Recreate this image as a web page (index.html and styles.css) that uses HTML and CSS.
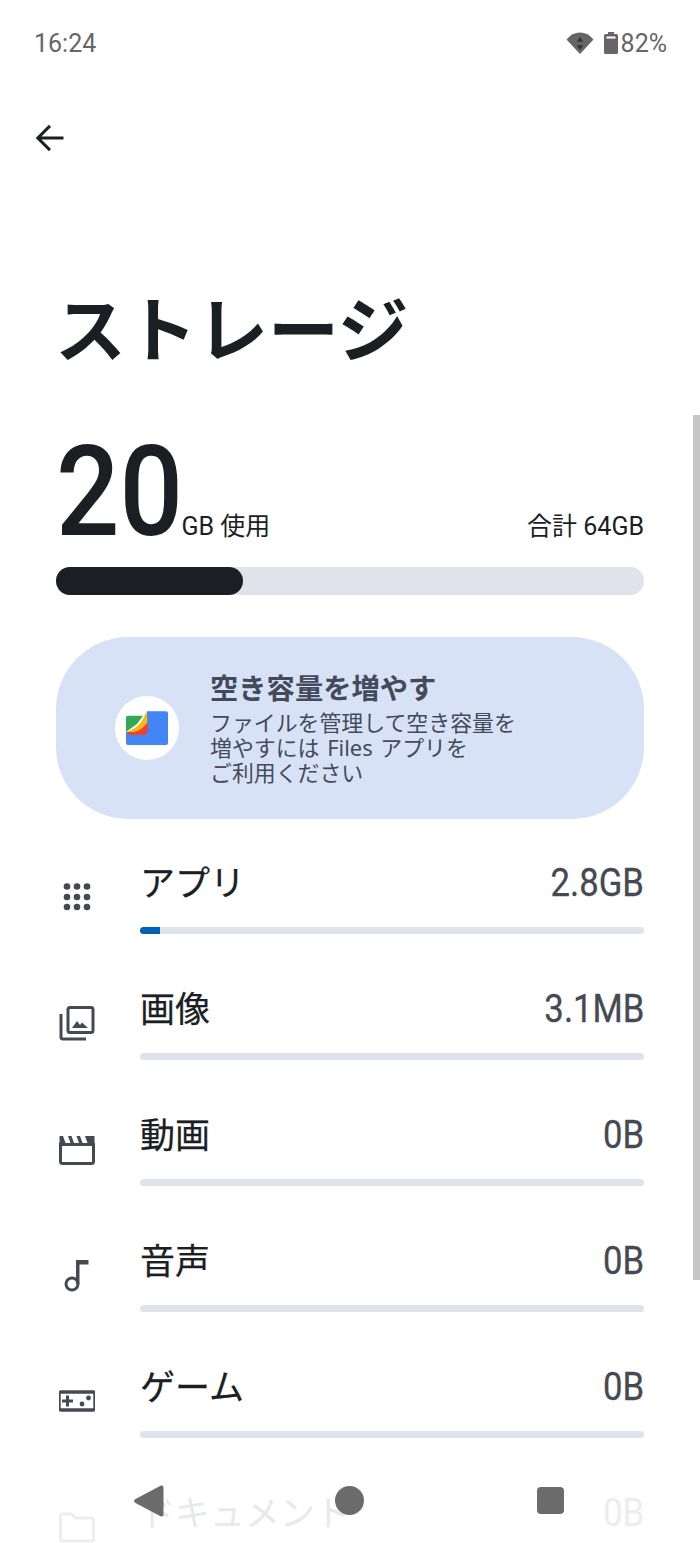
FILE: index.html
```html
<!DOCTYPE html>
<html lang="ja">
<head>
<meta charset="utf-8">
<title>ストレージ</title>
<link rel="stylesheet" href="styles.css">
</head>
<body>
<div class="screen">
  <header class="status">
    <span class="time">16:24</span>
    <div class="status-right">
      <svg class="wifi" viewBox="0 0 28 22"><path fill="#666" d="M14 22 .5 7.500Q6 .5 14 .5t13.500 7z"/><path fill="#333" d="M14 5l3.200 4.800h-6.400zM14 18l-3.200-4.800h6.400z"/></svg>
      <svg class="battery" viewBox="0 0 14 22"><path fill="#666" d="M4 0h6v2h2.500q1.500 0 1.500 1.500v17q0 1.500-1.500 1.500h-11Q0 22 0 20.500v-17Q0 2 1.500 2H4z"/><rect x="2.500" y="4.500" width="9" height="2" fill="#fff"/></svg>
      <span class="pct">82%</span>
    </div>
  </header>
  <nav class="toolbar">
    <svg class="back" viewBox="0 0 30 30"><path fill="none" stroke="#1b1f24" stroke-width="3.200" d="M30 15H3M15.500 2 2.500 15l13 13"/></svg>
  </nav>
  <h1 class="title">ストレージ</h1>
  <section class="summary">
    <div class="usage">
      <span class="big">20</span><span class="unit">GB 使用</span>
      <span class="total">合計 64GB</span>
    </div>
    <div class="meter"><div class="meter-fill"></div></div>
  </section>
  <section class="promo">
    <div class="promo-icon">
      <svg viewBox="0 0 64 64" width="64" height="64">
        <path fill="#4285f4" d="M32 15.300H51q2 0 2 2V47q0 2-2 2H13q-2 0-2-2V36H32z"/>
        <path fill="#34a853" d="M13 19.700H28L22 28 11 36V21.700q0-2 2-2z"/>
        <path fill="#ea4335" d="M31 17 33 33Q33 39 28 39H15L11.500 36.500Q28 30 31 17z"/>
        <path fill="#fbbc04" d="M12 36Q27 31 31 15.500 33 22 32 27 27 34 19 36z"/>
      </svg>
    </div>
    <div class="promo-text">
      <h2>空き容量を増やす</h2>
      <p>ファイルを管理して空き容量を<br>増やすには Files アプリを<br>ご利用ください</p>
    </div>
  </section>
  <ul class="rows">
    <li class="row">
      <svg class="ico" viewBox="0 0 36 36"><g fill="#454a52"><circle cx="8" cy="7.500" r="3.300"/><circle cx="18" cy="7.500" r="3.300"/><circle cx="28" cy="7.500" r="3.300"/><circle cx="8" cy="18" r="3.300"/><circle cx="18" cy="18" r="3.300"/><circle cx="28" cy="18" r="3.300"/><circle cx="8" cy="28" r="3.300"/><circle cx="18" cy="28" r="3.300"/><circle cx="28" cy="28" r="3.300"/></g></svg>
      <div class="row-body"><div class="row-head"><span class="label">アプリ</span><span class="value">2.8GB</span></div><div class="bar"><div class="bar-fill"></div></div></div>
    </li>
    <li class="row">
      <svg class="ico" viewBox="0 0 36 36"><g fill="none" stroke="#454a52" stroke-width="3"><rect x="9" y="2.500" width="25" height="25" rx="2"/><path d="M2 9v23q0 2 2 2h23"/></g><path fill="#454a52" d="M13 23l5-7 3 4 2-2.500 6 5.500z"/></svg>
      <div class="row-body"><div class="row-head"><span class="label">画像</span><span class="value">3.1MB</span></div><div class="bar"></div></div>
    </li>
    <li class="row">
      <svg class="ico" viewBox="0 0 36 36"><path fill="none" stroke="#454a52" stroke-width="3" d="M1.500 13.500h33v17q0 2-2 2h-29q-2 0-2-2z"/><path fill="#454a52" d="M.500 5h3.500l2.500 7H.500zM9 5h3.500l2.500 7h-3.500zM17.500 5H21l2.500 7H20zM26 5h9.500v7H28.500z"/></svg>
      <div class="row-body"><div class="row-head"><span class="label">動画</span><span class="value">0B</span></div><div class="bar"></div></div>
    </li>
    <li class="row">
      <svg class="ico" viewBox="0 0 36 36"><circle cx="13" cy="27" r="6" fill="none" stroke="#454a52" stroke-width="3"/><path fill="#454a52" d="M17 3h12.500v4.500H20.500V27H17z"/></svg>
      <div class="row-body"><div class="row-head"><span class="label">音声</span><span class="value">0B</span></div><div class="bar"></div></div>
    </li>
    <li class="row">
      <svg class="ico" viewBox="0 0 36 36"><rect x="0" y="9" width="36" height="18" rx="2" fill="none" stroke="#454a52" stroke-width="3.400"/><path fill="#454a52" d="M7 12.500h3V16.500h4v3h-4V23.500H7V19.500H3v-3h4z"/><circle cx="23" cy="21" r="2.400" fill="#454a52"/><circle cx="29.500" cy="15" r="2.400" fill="#454a52"/></svg>
      <div class="row-body"><div class="row-head"><span class="label">ゲーム</span><span class="value">0B</span></div><div class="bar"></div></div>
    </li>
    <li class="row">
      <svg class="ico" viewBox="0 0 36 36"><path fill="none" stroke="#454a52" stroke-width="3" d="M1.500 7q0-2 2-2h9l4 4h16q2 0 2 2v19q0 2-2 2h-29q-2 0-2-2z"/></svg>
      <div class="row-body"><div class="row-head"><span class="label">ドキュメント</span><span class="value">0B</span></div><div class="bar"></div></div>
    </li>
  </ul>
  <div class="scrollbar"></div>
  <footer class="navbar">
    <svg class="nav-back" viewBox="0 0 30 32"><path fill="#6b6b6b" d="M27 .500q2.500-.500 2.500 2v27q0 2.500-2.500 2L1.500 18q-3-2 0-4z"/></svg>
    <span class="nav-home"></span>
    <span class="nav-recent"></span>
  </footer>
</div>
</body>
</html>
```

FILE: styles.css
```css
* { box-sizing: border-box; }
html, body { margin: 0; padding: 0; background: #fff; }
.screen {
  position: relative;
  width: 700px;
  height: 1543px;
  overflow: hidden;
  font-family: Roboto, "Noto Sans CJK JP", sans-serif;
  color: #1b1f24;
  background: #fff;
}
.status {
  display: flex;
  justify-content: space-between;
  align-items: center;
  height: 86px;
  padding: 0 33px 0 34px;
  color: #666;
  font-size: 25px;
}
.status-right { display: flex; align-items: center; }
.wifi { width: 28px; height: 22px; margin-right: 10px; }
.battery { width: 14px; height: 22px; margin-right: 3px; }
.toolbar { height: 106px; padding: 38px 0 0 35px; }
.back { display: block; width: 29px; height: 28px; }
.title {
  margin: 95px 0 0;
  height: 90px;
  padding-left: 55px;
  font-size: 71px;
  line-height: 90px;
  font-weight: 700;
  white-space: nowrap;
}
.summary { padding: 0 56px; margin-top: 48px; }
.usage {
  display: flex;
  align-items: baseline;
  height: 142px;
}
.big {
  display: inline-block;
  font-size: 127px;
  line-height: 134px;
  font-weight: 500;
  transform: scaleX(.88);
  transform-origin: left center;
  margin-right: -19px;
}
.unit { font-size: 25px; }
.total { font-size: 25px; margin-left: auto; }
.meter { height: 28px; border-radius: 14px; background: #e0e2ec; }
.meter-fill { width: 187px; height: 100%; border-radius: 14px; background: #1b1f24; }
.promo {
  display: flex;
  align-items: center;
  height: 182px;
  margin: 42px 56px 0;
  padding-left: 59px;
  border-radius: 72px;
  background: #d8e2f6;
  color: #434a5a;
  font-family: "Noto Sans", "Noto Sans CJK JP", sans-serif;
}
.promo-icon {
  flex: none;
  width: 64px;
  height: 64px;
  border-radius: 50%;
  background: #fff;
}
.promo-icon svg { display: block; }
.promo-text { margin-left: 31px; padding-bottom: 2px; }
.promo-text h2 { margin: 0 0 4px; font-size: 28.300px; line-height: 36px; font-weight: 700; }
.promo-text p { margin: 0; font-size: 21.900px; line-height: 25px; word-spacing: 2px; }
.rows { list-style: none; margin: 41px 0 0; padding: 0 56px; display: flex; flex-direction: column; gap: 52px; }
.row { display: flex; align-items: center; height: 74px; }
.ico { flex: none; width: 36px; height: 36px; margin-left: 3px; margin-right: 45px; }
.row-body { flex: 1; }
.row-head { display: flex; justify-content: space-between; align-items: center; height: 46px; margin-bottom: 21px; }
.label { font-size: 35px; line-height: 46px; padding-top: 4px; -webkit-text-stroke: .25px #1b1f24; }
.value {
  display: inline-block;
  font-size: 39px;
  line-height: 46px;
  color: #454a52;
  -webkit-text-stroke: .3px #454a52;
  transform: scaleX(.89);
  transform-origin: right center;
}
.bar { height: 7px; border-radius: 4px; background: #e0e2ec; overflow: hidden; }
.bar-fill { width: 20px; height: 100%; background: #0061b5; }
.scrollbar { position: absolute; right: 0; top: 415px; width: 7px; height: 865px; background: #c6c6c6; }
.navbar {
  position: absolute;
  left: 0;
  right: 0;
  bottom: 0;
  height: 78px;
  background: rgba(255,255,255,.9);
}
.nav-back { position: absolute; left: 134px; top: 20px; width: 30px; height: 32px; }
.nav-home { position: absolute; left: 335px; top: 21px; width: 29px; height: 29px; border-radius: 50%; background: #6b6b6b; }
.nav-recent { position: absolute; left: 537px; top: 22px; width: 27px; height: 27px; border-radius: 4px; background: #6b6b6b; }
```
